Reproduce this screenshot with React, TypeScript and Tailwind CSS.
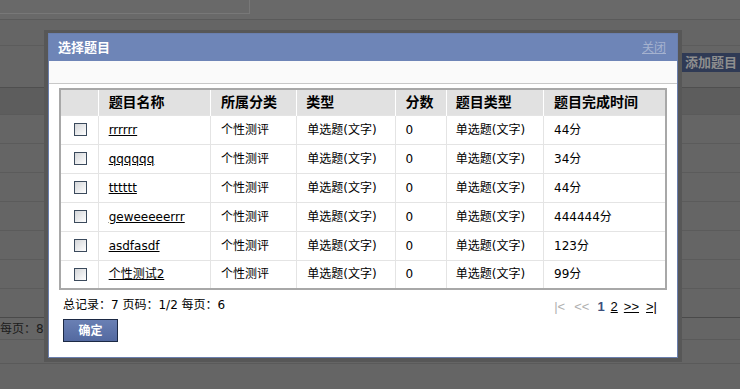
import React from "react";

const rows = [
  { name: "rrrrrr", time: "44分" },
  { name: "qqqqqq", time: "34分" },
  { name: "tttttt", time: "44分" },
  { name: "geweeeeerrr", time: "444444分" },
  { name: "asdfasdf", time: "123分" },
  { name: "个性测试2", time: "99分" },
];

const font = { fontFamily: '"DejaVu Sans", "Noto Sans CJK SC", sans-serif' };
const pagerFont = { fontFamily: '"Liberation Sans", "Noto Sans CJK SC", sans-serif' };

function Checkbox() {
  return (
    <div className="w-[13px] h-[13px] border border-[#3b4a5c] bg-gradient-to-br from-[#d4d6d9] to-[#ffffff]" />
  );
}

export default function App() {
  return (
    <div
      className="relative w-[740px] h-[389px] overflow-hidden bg-[#656565] text-[12px] text-black"
      style={font}
    >
      {/* dimmed page beneath */}
      <div className="flex flex-col">
        <div className="h-[20px] border-b border-[#5a5a5a] bg-[#696969]">
          <div className="w-[250px] h-[14px] border-b border-r border-[#787878]" />
        </div>
        <div className="h-[26px] border-b border-[#5c5c5c]" />
        <div className="h-[42px] border-b border-[#4f4f4f] flex">
          <div className="ml-auto mt-[7px] w-[58px] h-[19px] bg-[#2f3a55] pl-[3px] text-[13px] font-bold text-[#8e8e8e] leading-[19px] whitespace-nowrap">
            添加题目
          </div>
        </div>
        <div className="h-[27px] bg-[#5d5d5d] border-b border-[#5a5a5a]" />
        {Array.from({ length: 6 }).map((_, i) => (
          <div key={i} className="h-[29px] border-b border-[#5b5b5b]" />
        ))}
        <div className="h-[29px] border-b border-[#4a4a4a]" />
        <div className="h-[22px] flex items-center border-b border-[#5a5a5a]">
          <span className="whitespace-nowrap text-[#1c1c1c]">每页：8</span>
        </div>
        <div className="h-[24px] border-b border-[#5a5a5a]" />
      </div>

      {/* modal */}
      <div className="absolute left-[44px] top-[30px] w-[638px] h-[332px] bg-[#575757] pt-[3px] pb-[4px] px-[4px]">
        <div className="w-full h-full border border-[#6a7fae] bg-white flex flex-col">
          <div className="h-[27px] bg-[#6e85b7] flex items-center justify-between pl-[9px] pr-[11px]">
            <span className="text-white font-bold text-[13px]">选择题目</span>
            <span className="text-[#a5b2cf] underline text-[12px]">关闭</span>
          </div>
          <div className="h-[23px] bg-[#fafafa] border-b border-[#c8c8c8]" />
          <div className="pl-[10px] pt-[4px]">
            <table className="border-2 border-[#a8a8a8] border-collapse table-fixed w-[608px]">
              <colgroup>
                <col className="w-[38px]" />
                <col className="w-[112px]" />
                <col className="w-[86px]" />
                <col className="w-[98px]" />
                <col className="w-[51px]" />
                <col className="w-[97px]" />
                <col className="w-[122px]" />
              </colgroup>
              <thead>
                <tr className="h-[26px] bg-[#e1e1e1] text-[14px] font-bold text-left">
                  <th className="border-r border-white" />
                  <th className="border-r border-white pl-[10px] font-bold">题目名称</th>
                  <th className="border-r border-white pl-[10px] font-bold">所属分类</th>
                  <th className="border-r border-white pl-[9px] font-bold">类型</th>
                  <th className="border-r border-white pl-[10px] font-bold">分数</th>
                  <th className="border-r border-white pl-[9px] font-bold">题目类型</th>
                  <th className="pl-[10px] font-bold">题目完成时间</th>
                </tr>
              </thead>
              <tbody>
                {rows.map((r, i) => (
                  <tr key={i} className="h-[29px] border-t border-[#e4e4e4]">
                    <td className="border-r border-[#e4e4e4]">
                      <div className="flex justify-center pl-[2px]">
                        <Checkbox />
                      </div>
                    </td>
                    <td className="border-r border-[#e4e4e4] pl-[10px]">
                      <span className="underline">{r.name}</span>
                    </td>
                    <td className="border-r border-[#e4e4e4] pl-[10px]">个性测评</td>
                    <td className="border-r border-[#e4e4e4] pl-[10px]">单选题(文字)</td>
                    <td className="border-r border-[#e4e4e4] pl-[10px]">0</td>
                    <td className="border-r border-[#e4e4e4] pl-[9px]">单选题(文字)</td>
                    <td className="pl-[10px]">{r.time}</td>
                  </tr>
                ))}
              </tbody>
            </table>
          </div>
          <div className="flex items-center justify-between pl-[14px] pr-[20px] h-[26px] pt-[4px]">
            <span>总记录：7 页码：1/2 每页：6</span>
            <div className="flex items-center text-[13px] mt-[4px]" style={pagerFont}>
              <span className="text-[#b0b0b0]">|&lt;</span>
              <span className="text-[#b0b0b0] ml-[9px]">&lt;&lt;</span>
              <span className="font-bold text-[#3b4f7d] ml-[8px]">1</span>
              <span className="underline ml-[6px]">2</span>
              <span className="underline ml-[6px]">&gt;&gt;</span>
              <span className="underline ml-[7px]">&gt;|</span>
            </div>
          </div>
          <div className="pl-[14px] pt-[3px]">
            <div className="w-[55px] h-[23px] border border-[#1c2944] bg-gradient-to-b from-[#6a80b4] to-[#5369a0] text-white font-bold text-[12px] flex items-center justify-center">
              确定
            </div>
          </div>
        </div>
      </div>
    </div>
  );
}
